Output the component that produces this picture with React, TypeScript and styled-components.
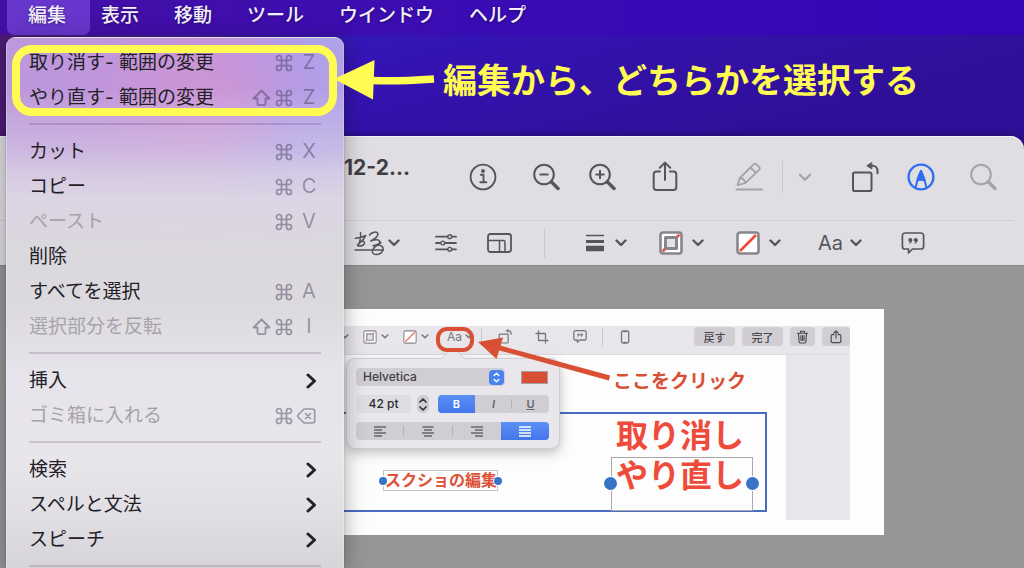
import React from "react";
import styled, { createGlobalStyle, css } from "styled-components";

const jp = `"Noto Sans CJK JP", "Noto Sans", sans-serif`;
const latin = `Inter, "Noto Sans CJK JP", sans-serif`;

const GlobalStyle = createGlobalStyle`
  *, *::before, *::after { box-sizing: border-box; }
  body { margin: 0; background: #969696; font-family: ${jp}; }
  button, input, select {
    font: inherit; color: inherit; border: 0; margin: 0; padding: 0;
    background: none; appearance: none; border-radius: 0;
  }
  svg { display: block; flex: none; }
`;

const Desktop = styled.div`
  position: relative;
  display: flex;
  flex-direction: column;
  height: 100vh;
  overflow: hidden;
  background:
    linear-gradient(90deg, #4d1c74 0, rgba(60, 35, 190, 0) 360px),
    linear-gradient(165deg, #3826c0 0, #3413b4 160px, #300f98 320px);
`;

/* ---------- menu bar ---------- */

const MenuBar = styled.nav`
  display: flex;
  gap: 1px;
  flex: none;
  height: 35px;
  padding-left: 11px;
  background: linear-gradient(90deg, #4410a4 0, #3a0cb4 45%, #3205b6 100%);
`;

const MenuTitle = styled.button<{ $open?: boolean }>`
  position: relative;
  height: 35px;
  padding: 0 17px 7px;
  font-size: 19px;
  line-height: 28px;
  font-weight: 500;
  color: #f3effb;
  text-shadow: 0 1px 3px rgba(0, 0, 0, 0.4);
  z-index: 0;
  ${(p) =>
    p.$open &&
    css`
      &::before {
        content: "";
        position: absolute;
        inset: 0 -7px 0 -4px;
        border-radius: 0 0 7px 7px;
        background: #6736cd;
        z-index: -1;
      }
    `}
`;

/* ---------- drop-down menu ---------- */

const Menu = styled.div`
  position: absolute;
  top: 37px;
  bottom: 0;
  left: 6px;
  width: 338px;
  padding: 7px 22px 0 22px;
  overflow: hidden;
  border: 1px solid rgba(255, 255, 255, 0.25);
  border-bottom: 0;
  border-radius: 9px 9px 0 0;
  box-shadow: 0 4px 22px rgba(0, 0, 0, 0.34), 0 0 1px rgba(0, 0, 0, 0.6);
  background:
    linear-gradient(180deg, rgba(221, 214, 229, 0) 0, rgba(221, 214, 229, 0) 50px, rgba(221, 214, 229, 0.25) 82px,
      rgba(221, 214, 229, 0.5) 113px, rgba(221, 215, 228, 0.78) 135px, rgba(221, 215, 228, 0.95) 160px,
      #dbd8dd 215px, #dcdade 270px, #e6e4ea 330px, #e8e6eb 420px, #e2e0e5 470px, #d6d4d8 531px),
    radial-gradient(ellipse 130px 90px at 200px 50px, rgba(207, 150, 212, 0.9), rgba(207, 150, 212, 0)),
    linear-gradient(90deg, #bd98dc 0, #c094dc 60%, #ad9dec 82%, #b0a2e8 100%);
`;

const MenuItem = styled.button`
  display: flex;
  align-items: center;
  justify-content: space-between;
  width: 100%;
  height: 35px;
  font-family: ${latin};
  font-size: 19px;
  line-height: 35px;
  color: #232127;
  text-align: left;
  &:disabled { color: #a6a3ab; }
`;

const Separator = styled.hr`
  height: 2px;
  margin: 8px 0 9px;
  border: 0;
  background: rgba(70, 50, 90, 0.19);
`;

const Shortcut = styled.span`
  display: flex;
  align-items: center;
  gap: 4px;
  font-size: 20px;
  color: rgba(60, 50, 80, 0.45);
`;

const Key = styled.span`
  width: 24px;
  text-align: center;
`;

const SubmenuMark = styled.svg`
  margin-right: 4px;
  fill: none;
  stroke: #232127;
  stroke-width: 3;
  stroke-linecap: round;
  stroke-linejoin: round;
`;

type Entry = null | { label: string; keys?: string; shift?: boolean; sub?: boolean; off?: boolean };

const entries: Entry[] = [
  { label: "取り消す- 範囲の変更", keys: "Z" },
  { label: "やり直す- 範囲の変更", keys: "Z", shift: true },
  null,
  { label: "カット", keys: "X" },
  { label: "コピー", keys: "C" },
  { label: "ペースト", keys: "V", off: true },
  { label: "削除" },
  { label: "すべてを選択", keys: "A" },
  { label: "選択部分を反転", keys: "I", shift: true, off: true },
  null,
  { label: "挿入", sub: true },
  { label: "ゴミ箱に入れる", keys: "delete", off: true },
  null,
  { label: "検索", sub: true },
  { label: "スペルと文法", sub: true },
  { label: "スピーチ", sub: true },
  null,
];

/* ---------- preview window ---------- */

const Window = styled.main`
  display: flex;
  flex-direction: column;
  flex: 1;
  margin-top: 101px;
  overflow: hidden;
  border-radius: 0 14px 0 0;
  background: #e0dee3;
  box-shadow: inset 0 1px 0 #f3f2f5, 0 0 8px rgba(0, 0, 0, 0.4);
`;

const TitleBar = styled.header`
  display: flex;
  align-items: center;
  flex: none;
  height: 84px;
  padding: 0 27px 2px 344px;
  color: #57555a;
`;

const FileName = styled.h1`
  flex: 1;
  margin: 0;
  padding-bottom: 18px;
  font: 700 21px/24px ${latin};
  color: #403e43;
  white-space: nowrap;
`;

const MarkupBar = styled.div`
  display: flex;
  align-items: center;
  flex: none;
  height: 45px;
  margin-right: 10px;
  padding-left: 354px;
  border-top: 1px solid #d0ced3;
  color: #57555a;
`;

const Tool = styled.button<{ $before?: number; $gap?: number; $tint?: string }>`
  display: flex;
  align-items: center;
  flex: none;
  gap: ${(p) => p.$gap ?? 0}px;
  margin-left: ${(p) => p.$before ?? 0}px;
  color: ${(p) => p.$tint ?? "inherit"};
`;

const Rule = styled.span<{ $before: number; $h: number }>`
  flex: none;
  width: 1px;
  height: ${(p) => p.$h}px;
  margin-left: ${(p) => p.$before}px;
  background: #cbc9ce;
`;

const TextStyleLabel = styled.span<{ $size: number }>`
  font: 400 ${(p) => p.$size}px/24px ${latin};
`;

const Workspace = styled.section`
  flex: 1;
  min-height: 0;
  padding: 43px 140px 0;
  border-top: 1px solid #858585;
  background: #969696;
`;

/* ---------- opened picture ---------- */

const Sheet = styled.article`
  position: relative;
  padding: 17px 34px 15px 0;
  background: #fdfdfd;
`;

const Shot = styled.div`
  display: flex;
  flex-direction: column;
  height: 194px;
`;

const ShotBar = styled.div`
  display: flex;
  align-items: center;
  justify-content: flex-end;
  height: 29px;
  padding-bottom: 7px;
  border-bottom: 1px solid #dcdae0;
  background: #e8e6eb;
  color: #77757b;
`;

const ShotBody = styled.div`
  flex: 1;
  border-right: 64px solid #e8e6eb;
`;

const SmallButton = styled.button<{ $w: number; $before: number }>`
  display: flex;
  align-items: center;
  justify-content: center;
  flex: none;
  width: ${(p) => p.$w}px;
  height: 19px;
  margin-left: ${(p) => p.$before}px;
  border-radius: 4px;
  background: #d0ced3;
  color: #49474c;
  font-size: 11px;
  line-height: 16px;
  font-weight: 500;
`;

const Frame = styled.div<{ $x: number; $y: number; $w?: number; $h: number; $line: string; $thick: number; $round?: number }>`
  position: absolute;
  right: ${(p) => p.$x}px;
  top: ${(p) => p.$y}px;
  ${(p) => (p.$w ? `width: ${p.$w}px;` : "left: 0;")}
  height: ${(p) => p.$h}px;
  border: ${(p) => p.$thick}px solid ${(p) => p.$line};
  border-radius: ${(p) => p.$round ?? 0}px;
`;

const Handle = styled.span<{ $x: number; $y: number; $d: number }>`
  position: absolute;
  right: ${(p) => p.$x}px;
  top: ${(p) => p.$y}px;
  width: ${(p) => p.$d}px;
  height: ${(p) => p.$d}px;
  border-radius: 50%;
  background: #3873c8;
  box-shadow: 0 0 0 1px #fdfdfd;
`;

const Note = styled.p<{ $x: number; $y: number; $size: number; $line: number; $tint: string }>`
  position: absolute;
  right: ${(p) => p.$x}px;
  top: ${(p) => p.$y}px;
  margin: 0;
  font-size: ${(p) => p.$size}px;
  line-height: ${(p) => p.$line}px;
  font-weight: 700;
  color: ${(p) => p.$tint};
  white-space: nowrap;
`;

const RedArrow = styled.svg`
  position: absolute;
  top: 21px;
  right: 264px;
`;

/* ---------- text style popover ---------- */

const Popover = styled.form`
  position: absolute;
  top: 49px;
  right: 324px;
  display: flex;
  flex-direction: column;
  gap: 9px;
  width: 214px;
  height: 91px;
  padding: 9px 10px 9px 9px;
  border: 1px solid #cfcdd2;
  border-radius: 9px;
  background: #e9e7ec;
  box-shadow: 0 4px 12px rgba(0, 0, 0, 0.25);
`;

const PopoverTip = styled.svg`
  position: absolute;
  top: -11px;
  left: 92px;
`;

const PopoverRow = styled.div`
  display: flex;
  align-items: center;
  height: 18px;
`;

const SelectBox = styled.div`
  position: relative;
  width: 149px;
  height: 18px;
`;

const FontSelect = styled.select`
  display: block;
  width: 100%;
  height: 18px;
  padding-left: 7px;
  border-radius: 4px;
  background: #d0ced3;
  color: #403e43;
  font: 500 12px/18px ${latin};
`;

const SelectCap = styled.span`
  position: absolute;
  top: 2px;
  right: 1px;
  display: grid;
  place-items: center;
  width: 15px;
  height: 15px;
  border-radius: 4px;
  background: #4a83f0;
  color: #ffffff;
  pointer-events: none;
`;

const Swatch = styled.button`
  width: 27px;
  height: 13px;
  margin-left: 16px;
  border: 1px solid #a8a09f;
  background: #d94f33;
`;

const SizeInput = styled.input`
  width: 55px;
  height: 18px;
  background: #dfdde2;
  color: #2c2a2f;
  font: 500 12px/18px ${latin};
  text-align: center;
`;

const Stepper = styled.button`
  display: grid;
  place-items: center;
  width: 12px;
  height: 18px;
  margin: 0 9px 0 6px;
  border-radius: 5px;
  background: #d0ced3;
  color: #37353a;
`;

const Segments = styled.div`
  display: flex;
  flex: 1;
  height: 18px;
  overflow: hidden;
  border-radius: 4px;
  background: #d0ced3;
`;

const Segment = styled.button<{ $on?: boolean; $rule?: boolean }>`
  position: relative;
  display: grid;
  place-items: center;
  flex: 1;
  font: 600 11px/18px ${latin};
  color: ${(p) => (p.$on ? "#ffffff" : "#69676c")};
  background: ${(p) => (p.$on ? "linear-gradient(#5b90f3, #4475ec)" : "none")};
  ${(p) =>
    p.$rule &&
    css`
      &::after {
        content: "";
        position: absolute;
        right: 0;
        top: 4px;
        width: 1px;
        height: 10px;
        background: #b5b3b8;
      }
    `}
`;

/* ---------- callout over the desktop ---------- */

const Highlight = styled.div`
  position: absolute;
  top: 45px;
  left: 12px;
  width: 325px;
  height: 71px;
  border: 8px solid #fffb52;
  border-radius: 20px;
  pointer-events: none;
`;

const YellowArrow = styled.svg`
  position: absolute;
  top: 56px;
  left: 332px;
`;

const Callout = styled.p`
  position: absolute;
  top: 55px;
  left: 443px;
  margin: 0;
  font-size: 34px;
  line-height: 48px;
  font-weight: 700;
  color: #fffb52;
  white-space: nowrap;
`;

/* ---------- icons ---------- */

type IconProps = { w: number; h?: number; box?: string; sw?: number; children: React.ReactNode };

const Icon = ({ w, h = w, box, sw = 2, children }: IconProps) => (
  <svg width={w} height={h} viewBox={box ?? `0 0 ${w} ${h}`} fill="none" stroke="currentColor" strokeWidth={sw}
    strokeLinecap="round" strokeLinejoin="round" aria-hidden="true">
    {children}
  </svg>
);

const Chevron = ({ w = 12, sw = 2.4 }: { w?: number; sw?: number }) => (
  <Icon w={w} h={Math.round(w * 0.67)} box="0 0 12 8" sw={sw}><path d="M1.5 1.5 6 6l4.500-4.500" /></Icon>
);

const CommandKey = () => (
  <Icon w={18} sw={1.7}>
    <path d="M6.500 6.500V4A2.500 2.500 0 1 0 4 6.500h10A2.500 2.500 0 1 0 11.500 4v10a2.500 2.500 0 1 0 2.500-2.500H4A2.500 2.500 0 1 0 6.500 14z" />
  </Icon>
);

const ShiftKey = () => (
  <Icon w={19} h={18} sw={1.8}>
    <path d="M9.500 1.500 1.500 9.500h4v5.500q0 1.200 1.200 1.200h5.600q1.200 0 1.200-1.200V9.500h4z" />
  </Icon>
);

const DeleteKey = () => (
  <Icon w={19} h={18} sw={1.6}>
    <path d="M7 2h8.500a2.200 2.200 0 0 1 2.200 2.200v9.600a2.200 2.200 0 0 1-2.200 2.200H7L1.300 10.200a1.800 1.800 0 0 1 0-2.400z" />
    <path d="m8.500 6.500 5 5M13.500 6.500l-5 5" />
  </Icon>
);

const Info = () => (
  <Icon w={28} sw={1.9}>
    <circle cx="14" cy="14" r="12.400" />
    <path d="M11.800 11.800h2.700v7.200M11.300 19.200h6" />
    <circle cx="14" cy="8" r="1" fill="currentColor" />
  </Icon>
);

const Magnifier = ({ sign }: { sign?: "minus" | "plus" }) => (
  <Icon w={28} sw={2}>
    <circle cx="12" cy="11.500" r="9.800" />
    <path d="m19.500 19 6.500 6.500" strokeWidth="3.400" />
    {sign && <path d="M8.300 11.500h7.400" />}
    {sign === "plus" && <path d="M12 7.800v7.400" />}
  </Icon>
);

const Share = ({ w = 28, h = 32, sw = 2 }) => (
  <Icon w={w} h={h} box="0 0 28 32" sw={sw}>
    <path d="M9 10.500H5.500a2.800 2.800 0 0 0-2.800 2.800v13a2.800 2.800 0 0 0 2.800 2.800h17a2.800 2.800 0 0 0 2.800-2.800v-13a2.800 2.800 0 0 0-2.800-2.800H19" />
    <path d="M14 19V1.800M8.800 6.800 14 1.600l5.200 5.200" />
  </Icon>
);

const Pencil = () => (
  <Icon w={28} h={30} sw={1.8}>
    <path d="M1.500 27.500h25.500" strokeWidth="2" />
    <path d="m2.500 23.200 2.300-7.200L18.600 2.400a2.200 2.200 0 0 1 3 0l2.500 2.500a2.200 2.200 0 0 1 0 3L10.200 21.200z" />
    <path d="M4.800 16c2.900.3 5 2.300 5.400 5.200M15.500 5.500l5.400 5.400" />
  </Icon>
);

const Rotate = ({ w = 28, sw = 2 }) => (
  <Icon w={w} h={Math.round(w * 1.1)} box="0 0 28 31" sw={sw}>
    <rect x="2" y="10.500" width="18.500" height="18.500" rx="1.800" />
    <path d="M18.500 3.700h3c3 0 5 2.200 5 5.300v2.200" />
    <path d="m20.500.800-4.700 2.900 4.700 3z" fill="currentColor" strokeWidth="1" />
  </Icon>
);

const MarkupPen = () => (
  <Icon w={28} sw={2}>
    <circle cx="14" cy="14" r="12.400" strokeWidth="2.400" />
    <path d="M8.500 24.800 11 14.800 14 8l3 6.800 2.500 10M10.300 17.500q3.700-1.600 7.400 0" />
    <path d="M10.600 17 14 8l3.400 9q-3.400-1.400-6.800 0z" fill="currentColor" />
  </Icon>
);

const Signature = () => (
  <Icon w={30} h={26} sw={1.5}>
    <path d="M1 20h28.500" />
    <path d="M6.500 2.500c.5 4.500 0 8.500-2.500 13.500M1.500 8.300c4-.3 7.500-1.300 10.300-2.800-2 4-5.300 7.300-8.300 9.300M6.300 11.300c2.500-.5 4.500 0 4.200 1.700-.3 1.800-2.700 3-5.500 3" />
    <path d="M15.500 5c2-3 7.500-4 8.300-1.500.7 2.300-3 5.500-7 7.500 4-1.500 8.500-1.800 9 .7.400 2-3 3.300-6.800 4 4.500-1.300 9.500-.8 10 2.500.5 4-3 6.300-6.500 6.300-2.800 0-4.800-1.500-4-4 1-3 5-6 8.500-8" />
  </Icon>
);

const Sliders = () => (
  <Icon w={22} h={18} sw={1.8}>
    <path d="M1 2.700h11.500M17 2.700h4M1 9h4.500M10 9h11M1 15.300h11.500M17 15.300h4" />
    <circle cx="14.700" cy="2.700" r="1.900" strokeWidth="1.400" />
    <circle cx="7.700" cy="9" r="1.900" strokeWidth="1.400" />
    <circle cx="14.700" cy="15.300" r="1.900" strokeWidth="1.400" />
  </Icon>
);

const Panes = () => (
  <Icon w={25} h={20} sw={1.8}>
    <rect x="1" y="1" width="23" height="18" rx="2.400" />
    <path d="M1 7.500h15.500q1.500 0 1.500 1.500v10M12.500 7.500V19" strokeWidth="1.500" />
  </Icon>
);

const LineWeights = () => (
  <Icon w={18} h={18}>
    <path d="M0 1.500h18" strokeLinecap="butt" strokeWidth="1.500" />
    <path d="M0 7.500h18" strokeLinecap="butt" strokeWidth="3" />
    <path d="M0 14.500h18" strokeLinecap="butt" strokeWidth="5.400" />
  </Icon>
);

const BorderWell = ({ w = 24, thin = false }) => (
  <Icon w={w} box="0 0 24 24" sw={thin ? 1.8 : 2.6}>
    <rect x="1.500" y="1.500" width="21" height="21" rx="2.500" fill="#fff" stroke="#88868a" />
    <path d="M4.500 19.500 19.500 4.500" stroke="#ee4936" strokeWidth={thin ? 1.6 : 2.8} />
    <rect x="6.500" y="6.500" width="11" height="11" fill="#e4e2e7" stroke="#88868a" strokeWidth={thin ? 2 : 3} />
  </Icon>
);

const FillWell = ({ w = 24, thin = false }) => (
  <Icon w={w} box="0 0 24 24" sw={thin ? 1.8 : 2.6}>
    <rect x="1.500" y="1.500" width="21" height="21" rx="2.500" fill="#fff" stroke="#88868a" />
    <path d="M4 20 20 4" stroke="#ee4936" strokeWidth={thin ? 1.8 : 2.6} strokeLinecap="butt" />
  </Icon>
);

const Quote = ({ w = 24, sw = 1.7 }) => (
  <Icon w={w} h={Math.round(w * 0.92)} box="0 0 24 22" sw={sw}>
    <path d="M4 1h16a2.600 2.600 0 0 1 2.600 2.600v10.800A2.600 2.600 0 0 1 20 17h-8.500L7.500 21v-4H4a2.600 2.600 0 0 1-2.600-2.600V3.600A2.600 2.600 0 0 1 4 1z" />
    <g fill="currentColor" stroke="none">
      <circle cx="9.300" cy="8" r="2" /><circle cx="14.700" cy="8" r="2" />
    </g>
    <path d="M10.700 8.200c0 1.500-.6 2.500-2 3.100M16.100 8.200c0 1.500-.6 2.500-2 3.100" strokeWidth="1.200" />
  </Icon>
);

const Crop = () => (
  <Icon w={14} sw={1.3}><path d="M3.500 1v9.500H13M1 3.500h9.500V13" /></Icon>
);

const Phone = () => (
  <Icon w={14} sw={1.3}><rect x="3.500" y="1" width="7.200" height="12" rx="1.500" /><path d="M6 1.500h2.200M6 12.500h2.200" /></Icon>
);

const Trash = () => (
  <Icon w={13} h={14} sw={1.1}>
    <path d="M1.500 3.200h10M4.500 3V1.300h4V3M2.500 3.500l.6 8.300c0 .8.500 1.200 1.200 1.200h4.400c.7 0 1.200-.4 1.200-1.200l.6-8.300M4.900 5.500v5M6.500 5.500v5M8.100 5.500v5" />
  </Icon>
);

const AlignLines = ({ kind }: { kind: "left" | "center" | "right" | "full" }) => {
  const d = {
    left: "M0 1h12M0 4h8M0 7h12M0 10h8",
    center: "M0.500 1h11M2 4h8M0 7h12M2 10h8",
    right: "M0 1h12M4 4h8M0 7h12M4 10h8",
    full: "M0 1h12M0 4h12M0 7h12M0 10h12",
  }[kind];
  return <svg width="12" height="11" viewBox="0 0 12 11" stroke="currentColor" strokeWidth="1.400" aria-hidden="true"><path d={d} /></svg>;
};

const UpDown = ({ w, h, sw }: { w: number; h: number; sw: number }) => (
  <Icon w={w} h={h} box="0 0 8 14" sw={sw}><path d="M1 4.500 4 1.500l3 3M1 9.500l3 3 3-3" /></Icon>
);

/* ---------- parts ---------- */

const EditMenu = () => (
  <Menu role="menu" aria-label="編集">
    {entries.map((e, i) =>
      e === null ? (
        <Separator key={i} />
      ) : (
        <MenuItem key={i} role="menuitem" disabled={e.off}>
          {e.label}
          {e.sub && (
            <SubmenuMark width="11" height="16" viewBox="0 0 11 16" aria-hidden="true"><path d="m2 2 6.500 6L2 14" /></SubmenuMark>
          )}
          {e.keys && (
            <Shortcut>
              {e.shift && <ShiftKey />}
              <CommandKey />
              <Key>{e.keys === "delete" ? <DeleteKey /> : e.keys}</Key>
            </Shortcut>
          )}
        </MenuItem>
      )
    )}
  </Menu>
);

const TextPopover = () => (
  <Popover onSubmit={(e) => e.preventDefault()}>
    <PopoverTip width="28" height="12" viewBox="0 0 28 12" aria-hidden="true">
      <path d="M0 12V11C6 10 8 2 14 1c6 1 8 9 14 10v1z" fill="#e9e7ec" />
      <path d="M0 11C6 10 8 2 14 1c6 1 8 9 14 10" fill="none" stroke="#cfcdd2" />
    </PopoverTip>
    <PopoverRow>
      <SelectBox>
        <FontSelect aria-label="フォント" defaultValue="Helvetica"><option>Helvetica</option></FontSelect>
        <SelectCap><UpDown w={7} h={11} sw={1.7} /></SelectCap>
      </SelectBox>
      <Swatch type="button" aria-label="文字の色" />
    </PopoverRow>
    <PopoverRow>
      <SizeInput aria-label="サイズ" defaultValue="42 pt" />
      <Stepper type="button" aria-label="サイズを変更"><UpDown w={8} h={15} sw={1.7} /></Stepper>
      <Segments>
        <Segment type="button" $on>B</Segment>
        <Segment type="button" $rule><i>I</i></Segment>
        <Segment type="button"><u>U</u></Segment>
      </Segments>
    </PopoverRow>
    <PopoverRow>
      <Segments>
        <Segment type="button" aria-label="左揃え" $rule><AlignLines kind="left" /></Segment>
        <Segment type="button" aria-label="中央揃え" $rule><AlignLines kind="center" /></Segment>
        <Segment type="button" aria-label="右揃え"><AlignLines kind="right" /></Segment>
        <Segment type="button" aria-label="均等揃え" $on><AlignLines kind="full" /></Segment>
      </Segments>
    </PopoverRow>
  </Popover>
);

const OpenedPicture = () => (
  <Sheet>
    <Shot>
      <ShotBar>
        <Tool aria-label="線"><Chevron w={8} /></Tool>
        <Tool aria-label="枠線" $before={14} $gap={4}><BorderWell w={14} thin /><Chevron w={8} /></Tool>
        <Tool aria-label="塗り" $before={14} $gap={4}><FillWell w={14} thin /><Chevron w={8} /></Tool>
        <Tool aria-label="テキスト" $before={18} $gap={3}><TextStyleLabel $size={12}>Aa</TextStyleLabel><Chevron w={8} /></Tool>
        <Rule $before={8} $h={18} />
        <Tool aria-label="回転" $before={16}><Rotate w={14} sw={2.4} /></Tool>
        <Tool aria-label="切り抜き" $before={23}><Crop /></Tool>
        <Tool aria-label="説明" $before={24}><Quote w={14} sw={2.2} /></Tool>
        <Rule $before={15} $h={18} />
        <Tool aria-label="デバイス" $before={15}><Phone /></Tool>
        <SmallButton $w={41} $before={62}>戻す</SmallButton>
        <SmallButton $w={41} $before={7}>完了</SmallButton>
        <SmallButton $w={25} $before={7} aria-label="ゴミ箱"><Trash /></SmallButton>
        <SmallButton $w={28} $before={7} aria-label="共有"><Share w={12} h={14} sw={2.6} /></SmallButton>
      </ShotBar>
      <ShotBody />
    </Shot>

    <Frame $x={117} $y={103} $h={100} $line="#4a6cc0" $thick={2} />
    <Frame $x={131} $y={148} $w={142} $h={54} $line="#a9a9ac" $thick={1} />
    <Note $x={140} $y={104} $size={32} $line={40} $tint="#ee4b3a">取り消し<br />やり直し</Note>
    <Handle $x={267} $y={168} $d={13} />
    <Handle $x={125} $y={168} $d={13} />

    <Frame $x={386} $y={161} $w={115} $h={21} $line="#c4c4c6" $thick={1} />
    <Note $x={387} $y={159} $size={16} $line={22} $tint="#dc5138">スクショの編集</Note>
    <Handle $x={497} $y={168} $d={8} />
    <Handle $x={382} $y={168} $d={8} />

    <TextPopover />
    <Frame $x={410} $y={18} $w={38} $h={25} $line="#d94f33" $thick={4} $round={11} />
    <RedArrow width="142" height="54" viewBox="0 0 142 54" aria-hidden="true">
      <path d="M20 17.500 131.500 48" stroke="#d94f33" strokeWidth="5" />
      <path d="M0 12 25 7.500 18.500 29z" fill="#d94f33" />
    </RedArrow>
    <Note $x={138} $y={58} $size={19} $line={26} $tint="#d94f33">ここをクリック</Note>
  </Sheet>
);

export default function App() {
  return (
    <>
      <GlobalStyle />
      <Desktop>
        <MenuBar>
          <MenuTitle $open>編集</MenuTitle>
          <MenuTitle>表示</MenuTitle>
          <MenuTitle>移動</MenuTitle>
          <MenuTitle>ツール</MenuTitle>
          <MenuTitle>ウインドウ</MenuTitle>
          <MenuTitle>ヘルプ</MenuTitle>
        </MenuBar>

        <Window>
          <TitleBar>
            <FileName>12-2...</FileName>
            <Tool aria-label="情報"><Info /></Tool>
            <Tool aria-label="縮小" $before={35}><Magnifier sign="minus" /></Tool>
            <Tool aria-label="拡大" $before={28}><Magnifier sign="plus" /></Tool>
            <Tool aria-label="共有" $before={35}><Share /></Tool>
            <Tool aria-label="ハイライト" $before={56} $tint="#a5a3a8"><Pencil /></Tool>
            <Rule $before={19} $h={32} />
            <Tool aria-label="ハイライトの色" $before={15} $tint="#a5a3a8"><Chevron w={14} sw={2} /></Tool>
            <Tool aria-label="回転" $before={39}><Rotate /></Tool>
            <Tool aria-label="マークアップ" $before={28} $tint="#2f6fed"><MarkupPen /></Tool>
            <Tool aria-label="検索" $before={34} $tint="#a5a3a8"><Magnifier /></Tool>
          </TitleBar>
          <MarkupBar>
            <Tool aria-label="署名" $gap={4}><Signature /><Chevron /></Tool>
            <Tool aria-label="カラー調整" $before={35}><Sliders /></Tool>
            <Tool aria-label="サイズ調整" $before={30}><Panes /></Tool>
            <Rule $before={32} $h={30} />
            <Tool aria-label="線の太さ" $before={41} $gap={11}><LineWeights /><Chevron /></Tool>
            <Tool aria-label="枠線の色" $before={32} $gap={9}><BorderWell /><Chevron /></Tool>
            <Tool aria-label="塗りの色" $before={32} $gap={9}><FillWell /><Chevron /></Tool>
            <Tool aria-label="テキストスタイル" $before={37} $gap={7}><TextStyleLabel $size={20}>Aa</TextStyleLabel><Chevron /></Tool>
            <Tool aria-label="注釈" $before={39}><Quote /></Tool>
          </MarkupBar>
          <Workspace>
            <OpenedPicture />
          </Workspace>
        </Window>

        <EditMenu />

        <Highlight />
        <YellowArrow width="104" height="46" viewBox="0 0 104 46" aria-hidden="true">
          <path d="M2 23 42.500 4 41 43.500z" fill="#fffb52" />
          <path d="M40 24.500c20 1 40 0 62-1.500" fill="none" stroke="#fffb52" strokeWidth="7.500" />
        </YellowArrow>
        <Callout>編集から、どちらかを選択する</Callout>
      </Desktop>
    </>
  );
}
